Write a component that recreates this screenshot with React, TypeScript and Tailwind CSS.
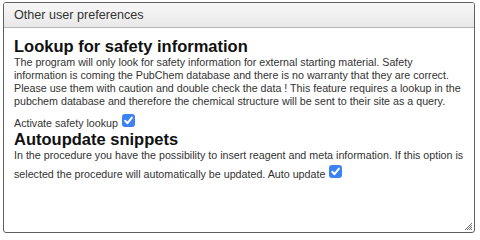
import React from "react";

function Check() {
  return (
    <span className="inline-block w-[13px] h-[13px] rounded-[3px] bg-[#3b82f6] align-[0px] mt-[3px] ml-[4px] relative">
      <svg viewBox="0 0 13 13" className="absolute inset-0 w-[13px] h-[13px]">
        <path d="M3.2 6.8 L5.5 9.2 L9.9 3.6" fill="none" stroke="#fff" strokeWidth="2" strokeLinecap="round" strokeLinejoin="round" />
      </svg>
    </span>
  );
}

export default function App() {
  return (
    <div className="pt-[2px] pl-[3px] font-['Liberation_Sans',Arial,sans-serif]">
      <div className="relative w-[472px] h-[231px] border border-[#5f5f5f] rounded-[3px] bg-white overflow-hidden">
        <div className="h-[25px] border-b border-[#b5b5b5] bg-gradient-to-b from-[#f8f8f8] to-[#e8e8e8] pl-[10px] flex items-center text-[12.6px] text-[#333]">
          Other user preferences
        </div>
        <div className="pl-[10px] pr-[8px] text-[#333]">
          <div className="mt-[9px] text-[16.5px] leading-[19px] font-bold text-[#111]">Lookup for safety information</div>
          <div className="text-[10.7px] leading-[13px]">
            The program will only look for safety information for external starting material. Safety information is coming the PubChem database and there is no warranty that they are correct. Please use them with caution and double check the data ! This feature requires a lookup in the pubchem database and therefore the chemical structure will be sent to their site as a query.
          </div>
          <div className="mt-[3px] text-[10.7px] leading-[13px]">
            Activate safety lookup<Check />
          </div>
          <div className="text-[16.5px] leading-[19px] font-bold text-[#111]">Autoupdate snippets</div>
          <div className="text-[10.7px] leading-[13px]">
            In the procedure you have the possibility to insert reagent and meta information. If this option is selected the procedure will automatically be updated. Auto update<Check />
          </div>
        </div>
        <svg className="absolute right-[1px] bottom-[1px]" width="10" height="10" viewBox="0 0 10 10">
          <path d="M9 2 L2 9 M9 4 L4 9 M9 6 L6 9 M9 8 L8 9" stroke="#777" strokeWidth="1" />
        </svg>
      </div>
    </div>
  );
}
